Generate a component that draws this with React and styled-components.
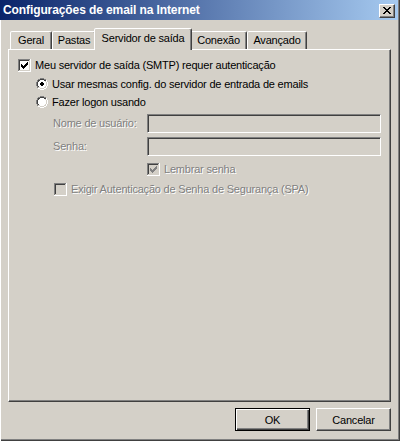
import React from 'react';
import styled, { createGlobalStyle } from 'styled-components';

const GlobalStyle = createGlobalStyle`
    html, body {
        margin: 0;
        padding: 0;
        background: #d4d0c8;
    }
    body {
        font-family: "Liberation Sans", Arial, sans-serif;
        font-size: 11px;
        letter-spacing: -0.2px;
        color: #000;
    }
`;

const Window = styled.div`
    width: 400px;
    height: 441px;
    box-sizing: border-box;
    padding: 0 2px 2px 0;
    background: #d4d0c8;
    box-shadow: inset 1px 0 0 #ffffff, inset -1px -1px 0 #404040, inset -2px -2px 0 #808080;
    display: flex;
    flex-direction: column;
`;

const TitleBar = styled.div`
    height: 20px;
    display: flex;
    align-items: flex-start;
    justify-content: space-between;
    background: linear-gradient(to right, #0a246a, #a6caf0);
    padding: 0 3px 0 3px;
`;

const Title = styled.span`
    font-weight: bold;
    font-size: 12px;
    letter-spacing: -0.1px;
    line-height: 20px;
    color: #fff;
    white-space: nowrap;
`;

const CloseButton = styled.div`
    width: 16px;
    height: 14px;
    margin-top: 4px;
    box-sizing: border-box;
    background: #d4d0c8;
    border: 1px solid;
    border-color: #fff #404040 #404040 #fff;
    box-shadow: inset -1px -1px 0 #808080;
    display: flex;
    align-items: flex-start;
    justify-content: flex-start;
    padding: 2px 0 0 3px;
`;

const TabStrip = styled.div`
    display: flex;
    align-items: flex-end;
    height: 21px;
    margin-top: 8px;
    padding-left: 10px;
`;

const Tab = styled.div`
    position: relative;
    z-index: ${p => (p.$active ? 2 : 1)};
    box-sizing: border-box;
    width: ${p => p.$width + (p.$active ? 4 : 0)}px;
    height: ${p => (p.$active ? 22 : 18)}px;
    margin: 0 ${p => (p.$active ? -2 : 0)}px ${p => (p.$active ? -1 : 0)}px;
    padding-bottom: ${p => (p.$active ? 4 : 1)}px;
    background: #d4d0c8;
    border: 1px solid;
    border-bottom: none;
    border-color: #fff #404040 transparent #fff;
    border-radius: 2px 2px 0 0;
    box-shadow: inset -1px 0 0 #808080;
    display: flex;
    align-items: center;
    justify-content: center;
    white-space: nowrap;
`;

const Panel = styled.div`
    margin-left: 8px;
    width: 383px;
    height: 353px;
    box-sizing: border-box;
    border: 1px solid;
    border-color: #fff #404040 #404040 #fff;
    box-shadow: inset -1px -1px 0 #808080;
    display: flex;
    flex-direction: column;
    align-items: flex-start;
`;

const Row = styled.div`
    display: flex;
    align-items: center;
    margin-top: ${p => p.$top}px;
    margin-left: ${p => p.$indent}px;
    height: ${p => p.$height || 13}px;
`;

const Label = styled.span`
    margin-left: 4px;
    line-height: 13px;
    white-space: nowrap;
    color: ${p => (p.$disabled ? '#808080' : '#000')};
    text-shadow: ${p => (p.$disabled ? '1px 1px 0 #fff' : 'none')};
`;

const FieldLabel = styled(Label)`
    margin-left: 0;
    width: 94px;
`;

const TextBox = styled.div`
    width: 234px;
    height: 19px;
    box-sizing: border-box;
    background: #d4d0c8;
    border: 1px solid;
    border-color: #808080 #fff #fff #808080;
    box-shadow: inset 1px 1px 0 #404040, inset -1px -1px 0 #d4d0c8;
`;

const ButtonBar = styled.div`
    display: flex;
    justify-content: flex-end;
    gap: 6px;
    margin-top: 6px;
    padding-right: 7px;
`;

const Button = styled.div`
    width: 75px;
    height: 23px;
    box-sizing: border-box;
    display: flex;
    align-items: center;
    justify-content: center;
    background: #d4d0c8;
    border: 1px solid;
    border-color: ${p => (p.$default ? '#000' : '#fff #404040 #404040 #fff')};
    box-shadow: ${p =>
        p.$default
            ? 'inset 1px 1px 0 #fff, inset -1px -1px 0 #404040, inset -2px -2px 0 #808080'
            : 'inset -1px -1px 0 #808080'};
`;

const PixelArt = ({ rows, palette, width, height }) => (
    <svg width={width} height={height} shapeRendering="crispEdges" style={{ display: 'block' }}>
        {rows.map((row, y) =>
            row.split('').map((c, x) =>
                palette[c] ? <rect key={`${x}-${y}`} x={x} y={y} width="1" height="1" fill={palette[c]} /> : null
            )
        )}
    </svg>
);

const CHECK_BOX = [
    'GGGGGGGGGGGGH',
    'GDDDDDDDDDDLH',
    'GDWWWWWWWWWLH',
    'GDWWWWWWWXWLH',
    'GDWWWWWWXXWLH',
    'GDWXWWWXXXWLH',
    'GDWXXWXXXWWLH',
    'GDWXXXXXWWWLH',
    'GDWWXXXWWWWLH',
    'GDWWWXWWWWWLH',
    'GDWWWWWWWWWLH',
    'GLLLLLLLLLLLH',
    'HHHHHHHHHHHHH',
];

const CheckBox = ({ checked, disabled }) => {
    const rows = checked ? CHECK_BOX : CHECK_BOX.map(r => r.replace(/X/g, 'W'));
    return (
        <PixelArt
            rows={rows}
            width={13}
            height={13}
            palette={{
                G: '#808080',
                D: '#404040',
                L: '#d4d0c8',
                H: '#ffffff',
                W: disabled ? '#d4d0c8' : '#ffffff',
                X: disabled ? '#808080' : '#000000',
            }}
        />
    );
};

const RADIO = [
    '....GGGG....',
    '..GGDDDDGG..',
    '.GDDWWWWDDH.',
    '.GDWWWWWWLH.',
    'GDWWWWWWWWLH',
    'GDWWWWWWWWLH',
    'GDWWWWWWWWLH',
    'GDWWWWWWWWLH',
    '.GDWWWWWWLH.',
    '.GLLWWWWLLH.',
    '..HHLLLLHH..',
    '....HHHH....',
];

const Radio = ({ checked }) => {
    const rows = RADIO.map((r, y) => {
        if (!checked || y < 4 || y > 7) return r;
        const dot = y === 4 || y === 7 ? '.XX.' : 'XXXX';
        return r.slice(0, 4) + dot.replace(/\./g, 'W') + r.slice(8);
    });
    return (
        <PixelArt
            rows={rows}
            width={12}
            height={13}
            palette={{ G: '#808080', D: '#404040', L: '#d4d0c8', H: '#ffffff', W: '#ffffff', X: '#000000' }}
        />
    );
};

const CLOSE_GLYPH = [
    'XX....XX',
    '.XX..XX.',
    '..XXXX..',
    '...XX...',
    '..XXXX..',
    '.XX..XX.',
    'XX....XX',
];

const tabs = [
    { label: 'Geral', width: 42 },
    { label: 'Pastas', width: 44 },
    { label: 'Servidor de saída', width: 94, active: true },
    { label: 'Conexão', width: 57 },
    { label: 'Avançado', width: 60 },
];

export default function App() {
    return (
        <>
            <GlobalStyle />
            <Window>
                <TitleBar>
                    <Title>Configurações de email na Internet</Title>
                    <CloseButton>
                        <PixelArt rows={CLOSE_GLYPH} width={8} height={7} palette={{ X: '#000' }} />
                    </CloseButton>
                </TitleBar>

                <TabStrip>
                    {tabs.map(t => (
                        <Tab key={t.label} $active={t.active} $width={t.width}>
                            {t.label}
                        </Tab>
                    ))}
                </TabStrip>

                <Panel>
                    <Row $top={9} $indent={9}>
                        <CheckBox checked />
                        <Label>Meu servidor de saída (SMTP) requer autenticação</Label>
                    </Row>
                    <Row $top={6} $indent={27}>
                        <Radio checked />
                        <Label>Usar mesmas config. do servidor de entrada de emails</Label>
                    </Row>
                    <Row $top={5} $indent={27}>
                        <Radio />
                        <Label>Fazer logon usando</Label>
                    </Row>
                    <Row $top={5} $indent={44} $height={19}>
                        <FieldLabel $disabled>Nome de usuário:</FieldLabel>
                        <TextBox />
                    </Row>
                    <Row $top={4} $indent={44} $height={19}>
                        <FieldLabel $disabled>Senha:</FieldLabel>
                        <TextBox />
                    </Row>
                    <Row $top={7} $indent={138}>
                        <CheckBox checked disabled />
                        <Label $disabled>Lembrar senha</Label>
                    </Row>
                    <Row $top={7} $indent={45}>
                        <CheckBox disabled />
                        <Label $disabled>Exigir Autenticação de Senha de Segurança (SPA)</Label>
                    </Row>
                </Panel>

                <ButtonBar>
                    <Button $default>OK</Button>
                    <Button>Cancelar</Button>
                </ButtonBar>
            </Window>
        </>
    );
}
